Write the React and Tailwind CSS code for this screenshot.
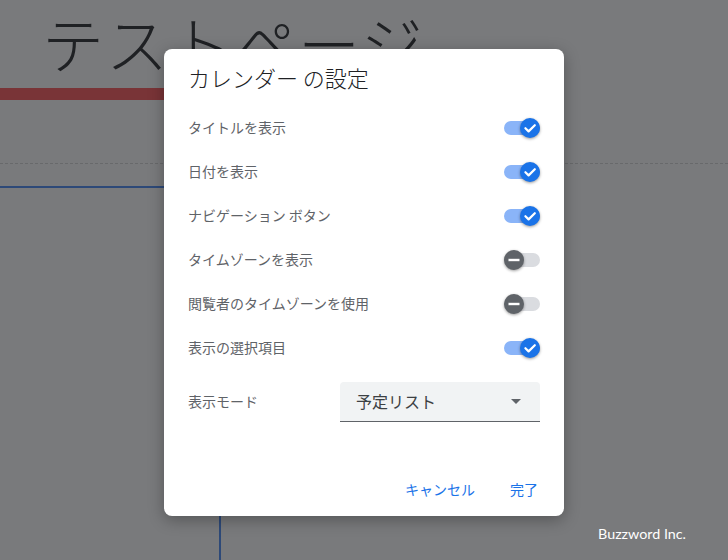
import React from "react";

const JP = { fontFamily: '"Noto Sans CJK JP", "Noto Sans", sans-serif' };

function Toggle({ on }) {
  return (
    <div className="relative w-[36px] h-[20px] shrink-0">
      <div
        className={
          "absolute left-0 top-[3px] w-[36px] h-[14px] rounded-full " +
          (on ? "bg-[#8ab4f8]" : "bg-[#dadce0]")
        }
      />
      <div
        className={
          "absolute top-0 w-[20px] h-[20px] rounded-full flex items-center justify-center shadow-[0_1px_3px_rgba(0,0,0,0.4)] " +
          (on ? "left-[16px] bg-[#1a73e8]" : "left-0 bg-[#5f6368]")
        }
      >
        {on ? (
          <svg width="20" height="20" viewBox="0 0 20 20">
            <path d="M5.4 10.2 L8.6 13.4 L14.8 7.2" fill="none" stroke="#fff" strokeWidth="2.2" strokeLinecap="round" strokeLinejoin="round" />
          </svg>
        ) : (
          <svg width="20" height="20" viewBox="0 0 20 20">
            <path d="M4.5 10 H15.5" fill="none" stroke="#fff" strokeWidth="2.4" />
          </svg>
        )}
      </div>
    </div>
  );
}

const rows = [
  ["タイトルを表示", true],
  ["日付を表示", true],
  ["ナビゲーション ボタン", true],
  ["タイムゾーンを表示", false],
  ["閲覧者のタイムゾーンを使用", false],
  ["表示の選択項目", true],
];

export default function App() {
  return (
    <div className="relative w-[728px] h-[560px] overflow-hidden bg-white" style={JP}>
      {/* background page */}
      <div className="flex flex-col">
        <div className="h-[88px] pl-[42px] pt-[2px] text-[62px] leading-[80px] font-light text-[#202124] tracking-[2px] whitespace-nowrap">
          テストページ
        </div>
        <div className="h-[12px] w-[300px] bg-[#ff5053]" />
        <div className="h-[63px]" />
        <div className="border-t border-dashed border-[#d4d4d4]" />
        <div className="h-[22px]" />
        <div className="flex">
          <div className="w-[221px] h-[380px] border-t-2 border-r-2 border-[#4285f4]" />
        </div>
      </div>

      {/* scrim */}
      <div className="absolute inset-0 bg-[#202124]/60" />

      <div className="absolute right-[42px] top-[524px] text-[14.3px] leading-[20px] text-white" style={{ fontFamily: 'Lato, "Noto Sans", sans-serif' }}>
        Buzzword Inc.
      </div>

      {/* dialog */}
      <div className="absolute inset-0 flex justify-center pt-[49px]">
        <div className="w-[400px] h-[467px] bg-white rounded-[8px] shadow-[0_4px_16px_rgba(0,0,0,0.3)] flex flex-col">
          <div className="pl-[24px] pt-[14px] text-[22px] leading-[28px] font-light text-[#202124]">
            カレンダー の設定
          </div>
          <div className="h-[15px]" />
          <div className="flex flex-col">
            {rows.map(([label, on]) => (
              <div key={label} className="h-[44px] flex items-center justify-between pl-[24px] pr-[24px]">
                <span className="text-[14px] leading-[20px] -mt-[2px] text-[#5f6368]">{label}</span>
                <Toggle on={on} />
              </div>
            ))}
          </div>
          <div className="h-[12px]" />
          <div className="flex items-center h-[40px] pl-[24px] pr-[24px]">
            <span className="w-[152px] text-[14px] leading-[20px] -mt-[2px] text-[#5f6368]">表示モード</span>
            <div className="flex-1 h-[40px] bg-[#f1f3f4] rounded-t-[4px] border-b border-[#5f6368] flex items-center justify-between pl-[16px] pr-[19px]">
              <span className="text-[16px] leading-[22px] -mt-[2px] text-[#3c4043]">予定リスト</span>
              <svg width="10" height="5" viewBox="0 0 10 5">
                <path d="M0 0 L10 0 L5 5 Z" fill="#5f6368" />
              </svg>
            </div>
          </div>
          <div className="flex-1" />
          <div className="flex justify-end items-center gap-[19px] pr-[18px] pb-[9px]">
            <button className="h-[36px] px-[8px] text-[14px] text-[#1a73e8]" style={JP}>キャンセル</button>
            <button className="h-[36px] px-[8px] text-[14px] text-[#1a73e8]" style={JP}>完了</button>
          </div>
        </div>
      </div>
    </div>
  );
}
